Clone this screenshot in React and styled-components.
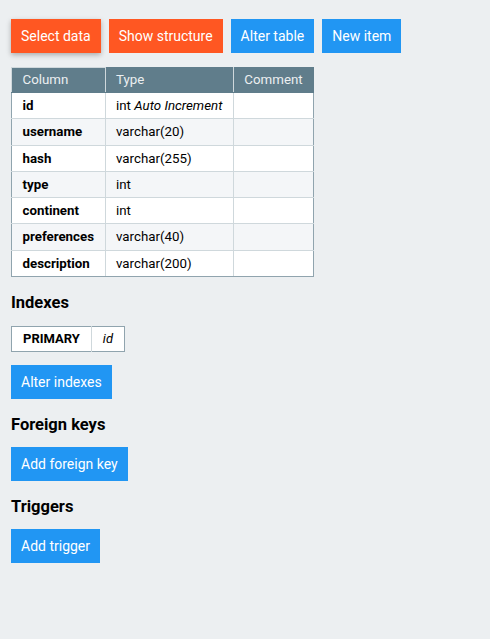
import React from 'react';
import styled, { createGlobalStyle } from 'styled-components';

const GlobalStyle = createGlobalStyle`
  html, body {
    margin: 0;
    padding: 0;
    background: #eceff1;
  }
  body {
    font-family: Roboto, "Liberation Sans", Arial, sans-serif;
    font-size: 14px;
    color: #000;
  }
`;

const columns = [
  { name: 'id', type: 'int', extra: 'Auto Increment' },
  { name: 'username', type: 'varchar(20)' },
  { name: 'hash', type: 'varchar(255)' },
  { name: 'type', type: 'int' },
  { name: 'continent', type: 'int' },
  { name: 'preferences', type: 'varchar(40)' },
  { name: 'description', type: 'varchar(200)' },
];

const App = () => (
  <>
    <GlobalStyle />
    <Page>
      <Toolbar>
        <Button $accent $raised>Select data</Button>
        <Button $accent>Show structure</Button>
        <Button>Alter table</Button>
        <Button>New item</Button>
      </Toolbar>

      <Table>
        <thead>
          <tr>
            <Th>Column</Th>
            <Th>Type</Th>
            <Th>Comment</Th>
          </tr>
        </thead>
        <tbody>
          {columns.map((c) => (
            <Row key={c.name}>
              <NameCell>{c.name}</NameCell>
              <Td>
                {c.type}
                {c.extra && <i> {c.extra}</i>}
              </Td>
              <Td />
            </Row>
          ))}
        </tbody>
      </Table>

      <Heading>Indexes</Heading>
      <IndexTable>
        <tbody>
          <tr>
            <IndexType>PRIMARY</IndexType>
            <IndexCol>id</IndexCol>
          </tr>
        </tbody>
      </IndexTable>
      <Button>Alter indexes</Button>

      <Heading>Foreign keys</Heading>
      <Button>Add foreign key</Button>

      <Heading>Triggers</Heading>
      <Button>Add trigger</Button>
    </Page>
  </>
);

export default App;

const Page = styled.div`
  display: flex;
  flex-direction: column;
  align-items: flex-start;
  padding: 19px 11px;
`;

const Toolbar = styled.div`
  display: flex;
  gap: 8px;
  margin-bottom: 14px;
`;

const Button = styled.button`
  height: 34px;
  padding: 0 10px;
  border: none;
  border-radius: 0;
  background: ${({ $accent }) => ($accent ? '#ff5722' : '#2196f3')};
  color: #fff;
  font-family: Roboto, "Liberation Sans", Arial, sans-serif;
  font-size: 14px;
  cursor: pointer;
  box-shadow: ${({ $raised }) =>
    $raised ? '0 2px 5px rgba(0, 0, 0, 0.28)' : 'none'};
`;

const Table = styled.table`
  border-collapse: collapse;
  background: #fff;
  font-size: 13.3px;
`;

const Th = styled.th`
  background: #607d8b;
  color: #eceff1;
  font-weight: normal;
  text-align: left;
  padding: 4px 10.5px;
  line-height: 16px;
  border: 1px solid #607d8b;
  border-right-color: #cfd8dc;

  &:first-child {
    border-left-color: #cfd8dc;
    border-top-color: #cfd8dc;
  }
  &:last-child {
    border-right-color: #607d8b;
  }
`;

const Row = styled.tr`
  background: #fff;

  &:nth-child(even) {
    background: #f4f6f8;
  }
  &:last-child td {
    border-bottom-color: #90a4ae;
  }
`;

const Td = styled.td`
  padding: 4px 10.5px;
  line-height: 17.3px;
  border: 1px solid #cfd8dc;

  &:last-child {
    border-right-color: #90a4ae;
  }
`;

const NameCell = styled(Td)`
  font-weight: bold;
  border-left-color: #90a4ae;
`;

const Heading = styled.h2`
  margin: 16px 0 12px;
  font-size: 16.5px;
  line-height: 20px;
  font-weight: bold;
`;

const IndexTable = styled.table`
  border-collapse: collapse;
  background: #fff;
  border: 1px solid #90a4ae;
  font-size: 13px;
  margin: 1px 0 13px;
`;

const IndexType = styled.th`
  text-align: left;
  font-weight: bold;
  padding: 4px 11px;
  line-height: 16px;
  border-right: 1px solid #cfd8dc;
`;

const IndexCol = styled.td`
  font-style: italic;
  padding: 4px 11px;
  line-height: 16px;
`;
